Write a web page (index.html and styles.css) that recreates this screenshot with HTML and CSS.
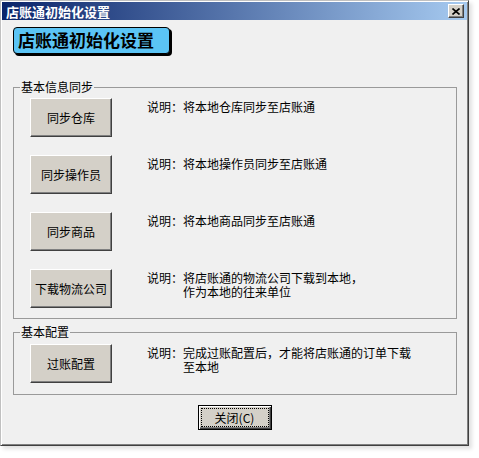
FILE: index.html
```html
<!DOCTYPE html>
<html lang="zh-CN">
<head>
    <meta charset="UTF-8">
    <title>店账通初始化设置</title>
    <link rel="stylesheet" href="styles.css">
</head>
<body>
    <div class="window">
        <div class="titlebar">
            <span class="title">店账通初始化设置</span>
            <button class="btn-x" type="button">
                <svg width="8" height="7" viewBox="0 0 8 7"><path d="M0.5 0.5L7.5 6.5M7.5 0.5L0.5 6.5" stroke="#000" stroke-width="1.6"/></svg>
            </button>
        </div>

        <div class="content">
            <div class="banner">店账通初始化设置</div>

            <fieldset class="group group-sync">
                <legend>基本信息同步</legend>

                <div class="row">
                    <button class="btn" type="button">同步仓库</button>
                    <div class="desc">
                        <span class="desc-label">说明：</span>
                        <span class="desc-text">将本地仓库同步至店账通</span>
                    </div>
                </div>

                <div class="row">
                    <button class="btn" type="button">同步操作员</button>
                    <div class="desc">
                        <span class="desc-label">说明：</span>
                        <span class="desc-text">将本地操作员同步至店账通</span>
                    </div>
                </div>

                <div class="row">
                    <button class="btn" type="button">同步商品</button>
                    <div class="desc">
                        <span class="desc-label">说明：</span>
                        <span class="desc-text">将本地商品同步至店账通</span>
                    </div>
                </div>

                <div class="row">
                    <button class="btn" type="button">下载物流公司</button>
                    <div class="desc">
                        <span class="desc-label">说明：</span>
                        <span class="desc-text">将店账通的物流公司下载到本地，<br>作为本地的往来单位</span>
                    </div>
                </div>
            </fieldset>

            <fieldset class="group group-config">
                <legend>基本配置</legend>

                <div class="row">
                    <button class="btn" type="button">过账配置</button>
                    <div class="desc">
                        <span class="desc-label">说明：</span>
                        <span class="desc-text">完成过账配置后，才能将店账通的订单下载<br>至本地</span>
                    </div>
                </div>
            </fieldset>

            <div class="footer">
                <button class="btn-close" type="button"><span class="focus">关闭(C)</span></button>
            </div>
        </div>
    </div>
</body>
</html>
```

FILE: styles.css
```css
:root {
    --color-face: #d4d0c8;
    --color-body: #f0f0f0;
    --color-shadow: #808080;
    --color-dark: #404040;
    --color-banner: #5bc4f5;
}

* {
    margin: 0;
    padding: 0;
    box-sizing: border-box;
    font-family: "Noto Sans CJK SC", sans-serif;
}

body {
    background-color: #ffffff;
    width: 479px;
    height: 458px;
    overflow: hidden;
}

.window {
    width: 469px;
    height: 446px;
    background-color: var(--color-body);
    border: 1px solid;
    border-color: #c0c0c0 var(--color-dark) var(--color-dark) #c0c0c0;
    box-shadow: inset 1px 1px 0 #ffffff, inset -1px -1px 0 var(--color-shadow), 3px 3px 4px rgba(0, 0, 0, 0.12);
    padding: 1px;
}

/* Barra de título */
.titlebar {
    height: 18px;
    display: flex;
    align-items: center;
    justify-content: space-between;
    padding: 0 3px 0 4px;
    background: linear-gradient(to right, #0a246a, #a6caf0);
}

.title {
    color: #ffffff;
    font-size: 13px;
    font-weight: 700;
    line-height: 13px;
}

.btn-x {
    width: 16px;
    height: 14px;
    display: flex;
    align-items: center;
    justify-content: center;
    background-color: var(--color-face);
    border: 1px solid;
    border-color: #ffffff var(--color-dark) var(--color-dark) #ffffff;
    box-shadow: inset -1px -1px 0 var(--color-shadow);
}

/* Contenido */
.content {
    padding: 7px 0 0 11px;
}

.banner {
    width: 157px;
    height: 27px;
    background-color: var(--color-banner);
    border: 1px solid #000000;
    border-radius: 4px;
    box-shadow: 2px 2px 0 #000000;
    padding-left: 4px;
    font-size: 17px;
    font-weight: 700;
    line-height: 24px;
    color: #000000;
}

.group {
    width: 444px;
    border: 1px solid #9a9a9a;
    padding: 0 0 10px;
}

.group legend {
    margin-left: 6px;
    padding: 0 1px;
    font-size: 12px;
    line-height: 12px;
    color: #000000;
}

.group-sync {
    margin-top: 27px;
    padding-top: 5px;
}

.group-config {
    margin-top: 7px;
    padding-top: 6px;
    padding-bottom: 11px;
}

.row {
    display: flex;
    align-items: flex-start;
    gap: 35px;
    margin-left: 16px;
}

.row + .row {
    margin-top: 18px;
}

.btn {
    width: 82px;
    height: 39px;
    flex-shrink: 0;
    background-color: var(--color-face);
    border: 1px solid;
    border-color: #ffffff var(--color-dark) var(--color-dark) #ffffff;
    box-shadow: inset -1px -1px 0 var(--color-shadow);
    font-size: 12px;
    line-height: 12px;
    color: #000000;
}

.desc {
    display: flex;
    margin-top: 2px;
    font-size: 12px;
    line-height: 14px;
    color: #000000;
}

.desc-label {
    width: 36px;
    flex-shrink: 0;
    font-family: "Noto Sans CJK TC", sans-serif;
}

/* Pie */
.footer {
    display: flex;
    justify-content: center;
    margin-top: 10px;
    padding-right: 11px;
}

.btn-close {
    width: 74px;
    height: 25px;
    padding: 2px;
    background-color: var(--color-face);
    border: 1px solid #000000;
    box-shadow: inset 1px 1px 0 #ffffff, inset -1px -1px 0 var(--color-dark), inset -2px -2px 0 var(--color-shadow);
}

.focus {
    display: flex;
    align-items: center;
    justify-content: center;
    height: 100%;
    border: 1px dotted #000000;
    font-size: 12px;
    line-height: 12px;
    color: #000000;
}
```
